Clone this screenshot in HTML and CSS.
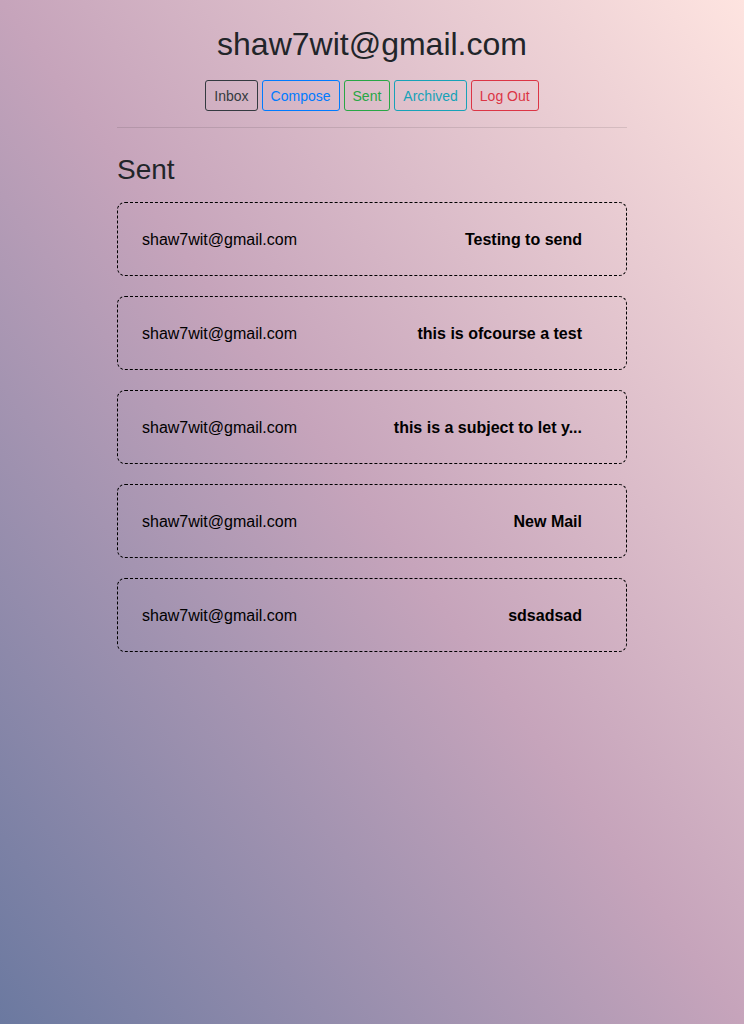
FILE: index.html
```html
<!DOCTYPE html>
<html>
<head>
<meta charset="utf-8">
<link rel="stylesheet" href="styles.css">
</head>
<body>
<div class="container">
  <h1 class="title">shaw7wit@gmail.com</h1>
  <nav class="nav">
    <button class="btn btn-dark">Inbox</button>
    <button class="btn btn-primary">Compose</button>
    <button class="btn btn-success">Sent</button>
    <button class="btn btn-info">Archived</button>
    <button class="btn btn-danger">Log Out</button>
  </nav>
  <hr class="rule">
  <h3 class="heading">Sent</h3>
  <div class="mails">
    <div class="mail"><span class="from">shaw7wit@gmail.com</span><span class="subject">Testing to send</span></div>
    <div class="mail"><span class="from">shaw7wit@gmail.com</span><span class="subject">this is ofcourse a test</span></div>
    <div class="mail"><span class="from">shaw7wit@gmail.com</span><span class="subject">this is a subject to let y...</span></div>
    <div class="mail"><span class="from">shaw7wit@gmail.com</span><span class="subject">New Mail</span></div>
    <div class="mail"><span class="from">shaw7wit@gmail.com</span><span class="subject">sdsadsad</span></div>
  </div>
</div>
</body>
</html>
```
FILE: styles.css
```css
html, body {
  margin: 0;
  min-height: 100%;
}
body {
  min-height: 1024px;
  font-family: "Liberation Sans", Arial, sans-serif;
  color: #212529;
  background: linear-gradient(to top right, #6b79a0 0%, #c6a4bb 50%, #fee4e0 100%);
}
.container {
  width: 510px;
  margin: 0 auto;
  padding-top: 25px;
}
.title {
  margin: 0 0 17px;
  font-size: 32px;
  line-height: 38px;
  font-weight: 400;
  text-align: center;
}
.nav {
  display: flex;
  justify-content: center;
  gap: 4px;
}
.btn {
  font-family: inherit;
  font-size: 14px;
  line-height: 21px;
  padding: 5px 8px 3px;
  border: 1px solid;
  border-radius: 3px;
  background: transparent;
  cursor: pointer;
}
.btn-dark { color: #343a40; border-color: #343a40; }
.btn-primary { color: #007bff; border-color: #007bff; }
.btn-success { color: #28a745; border-color: #28a745; }
.btn-info { color: #17a2b8; border-color: #17a2b8; }
.btn-danger { color: #dc3545; border-color: #dc3545; }
.rule {
  margin: 16px 0 0;
  border: 0;
  border-top: 1px solid rgba(0,0,0,0.1);
}
.heading {
  margin: 25px 0 0;
  font-size: 28px;
  line-height: 34px;
  font-weight: 400;
}
.mails {
  margin-top: 15px;
  display: flex;
  flex-direction: column;
  gap: 20px;
}
.mail {
  display: flex;
  justify-content: space-between;
  align-items: center;
  border: 1px dashed #000;
  border-radius: 8px;
  padding: 25px 44px 23px 24px;
  font-size: 16px;
  line-height: 24px;
  color: #000;
}
.subject {
  font-weight: 700;
}
```
